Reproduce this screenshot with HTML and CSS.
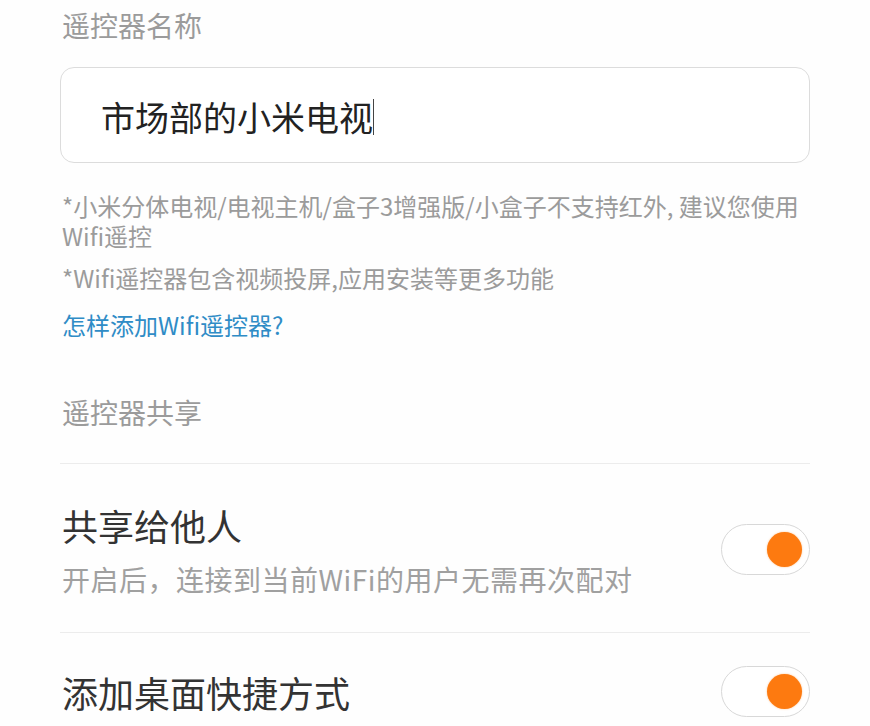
FILE: index.html
```html
<!DOCTYPE html>
<html lang="zh-CN">
<head>
    <meta charset="UTF-8">
    <meta name="viewport" content="width=device-width, initial-scale=1.0">
    <title>遥控器设置</title>
    <link rel="stylesheet" href="styles.css">
</head>
<body>
    <div class="page">
        <!-- 名称 -->
        <div class="field-label">遥控器名称</div>
        <div class="name-input">
            <span class="value">市场部的小米电视</span><span class="caret"></span>
        </div>
        <p class="note">*小米分体电视/电视主机/盒子3增强版/小盒子不支持红外, 建议您使用<br>Wifi遥控</p>
        <p class="note note-second">*Wifi遥控器包含视频投屏,应用安装等更多功能</p>
        <a class="help-link" href="#">怎样添加Wifi遥控器?</a>

        <!-- 共享 -->
        <div class="field-label section-label">遥控器共享</div>
        <div class="setting-row">
            <div class="setting-text">
                <div class="setting-title">共享给他人</div>
                <div class="setting-desc">开启后，连接到当前WiFi的用户无需再次配对</div>
            </div>
            <div class="switch on"><span class="knob"></span></div>
        </div>
        <div class="setting-row last">
            <div class="setting-text">
                <div class="setting-title">添加桌面快捷方式</div>
            </div>
            <div class="switch on"><span class="knob"></span></div>
        </div>
    </div>
</body>
</html>
```

FILE: styles.css
```css
body {
    margin: 0;
    background-color: #fefefe;
    font-family: "Noto Sans CJK SC", "Noto Sans", sans-serif;
}
.page {
    width: 750px;
    margin-left: 60px;
    padding-top: 5px;
}
.field-label {
    font-size: 28px;
    line-height: 40px;
    color: #9b9b9b;
    padding-left: 2px;
}
.name-input {
    box-sizing: border-box;
    margin-top: 22px;
    height: 96px;
    border: 1px solid #dcdcdc;
    border-radius: 14px;
    background: #fff;
    display: flex;
    align-items: center;
    padding-left: 40px;
    padding-top: 4px;
}
.name-input .value {
    font-size: 34px;
    color: #222;
    line-height: 40px;
}
.name-input .caret {
    display: inline-block;
    width: 1px;
    height: 36px;
    background: #444;
}
.note {
    margin: 28px 0 0;
    padding-left: 2px;
    font-size: 24px;
    line-height: 30px;
    color: #9b9b9b;
}
.note-second {
    margin-top: 12px;
}
.help-link {
    display: block;
    margin-top: 17px;
    padding-left: 2px;
    font-size: 24px;
    line-height: 30px;
    color: #2f8cc6;
    text-decoration: none;
}
.section-label {
    margin-top: 52px;
    padding-bottom: 31px;
    border-bottom: 1px solid #ececec;
}
.setting-row {
    display: flex;
    align-items: center;
    justify-content: space-between;
    padding: 37px 0 35px;
    border-bottom: 1px solid #ececec;
}
.setting-row.last {
    border-bottom: none;
    padding-top: 33px;
}
.setting-text {
    padding-left: 2px;
}
.setting-title {
    font-size: 36px;
    line-height: 48px;
    color: #333;
}
.setting-desc {
    margin-top: 12px;
    font-size: 28px;
    line-height: 36px;
    letter-spacing: 0.5px;
    color: #a0a0a0;
}
.switch {
    box-sizing: border-box;
    width: 89px;
    height: 51px;
    border: 1px solid #d8d8d8;
    border-radius: 26px;
    background: #fff;
    display: flex;
    align-items: center;
    justify-content: flex-end;
    padding-right: 7px;
}
.knob {
    width: 35px;
    height: 35px;
    border-radius: 50%;
    background: #fd7a10;
    box-shadow: 0 0 2px rgba(253, 150, 60, 0.6);
}
```
